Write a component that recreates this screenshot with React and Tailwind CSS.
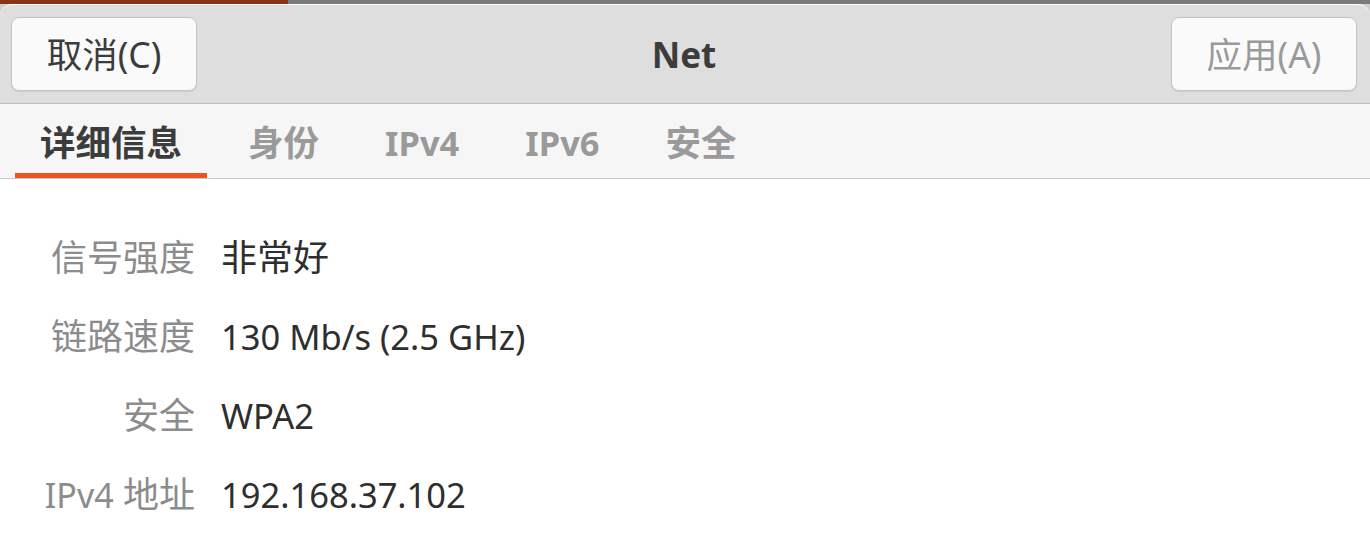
import React from "react";

const FONT = "font-['Noto_Sans','Noto_Sans_CJK_SC',sans-serif]";

const TABS = [
  ["详细信息", false],
  ["身份", false],
  ["IPv4", true],
  ["IPv6", true],
  ["安全", false],
];

const ROWS = [
  [null, "信号强度", "非常好", false],
  [null, "链路速度", "130 Mb/s (2.5 GHz)", true],
  [null, "安全", "WPA2", true],
  ["IPv4", " 地址", "192.168.37.102", true],
];

function HeaderButton({ children, disabled }) {
  return (
    <button
      type="button"
      className={`flex h-[74px] w-[186px] items-center justify-center rounded-[8px] border border-[#c3c3c3] bg-[#fafafa] pt-[2px] text-[35.5px] shadow-[0_1px_1px_rgba(0,0,0,0.08)] ${
        disabled ? "text-[#9a9a9a]" : "text-[#3c3c3c]"
      }`}
    >
      {children}
    </button>
  );
}

export default function App() {
  return (
    <div className={`h-[544px] w-[1370px] overflow-hidden bg-[#cfcfcf] ${FONT}`}>
      <div className="flex h-[4px]">
        <div className="w-[288px] bg-[#8a3414]" />
        <div className="flex-1 bg-[#7a7a7a]" />
      </div>
      <div className="flex h-[540px] flex-col overflow-hidden rounded-t-[12px] border-t border-white bg-white">
        {/* header bar */}
        <div className="flex h-[99px] items-center justify-between border-b border-[#bfbfbf] bg-[#dedede] pl-[11px] pr-[13px]">
          <HeaderButton>取消(C)</HeaderButton>
          <div className="pt-[2px] text-[35px] font-bold text-[#3c3c3c]">Net</div>
          <HeaderButton disabled>应用(A)</HeaderButton>
        </div>

        {/* tabs */}
        <div className="flex h-[75px] items-stretch gap-[16px] border-b border-[#c8c8c8] bg-[#f6f6f6] pl-[15px]">
          {TABS.map(([t, latin], i) => (
            <div
              key={t}
              className={`flex items-center border-b-[5px] px-[25px] pt-[8px] font-bold ${
                latin ? "text-[34.5px]" : "text-[35.5px]"
              } ${
                i === 0
                  ? "border-[#e95420] text-[#3c3c3c]"
                  : "border-transparent text-[#9a9a9a]"
              }`}
            >
              {t}
            </div>
          ))}
        </div>

        {/* details */}
        <div className="grid grid-cols-[195px_1fr] items-center gap-x-[26px] gap-y-[35px] bg-white pt-[57px] leading-[44px]">
          {ROWS.map(([prefix, label, value, latin]) => (
            <React.Fragment key={label}>
              <div className="text-right text-[36px] text-[#8c8c8c]">
                {prefix ? <span className="text-[34px]">{prefix}</span> : null}
                {label}
              </div>
              <div className={`${latin ? "text-[34.5px]" : "text-[36px]"} text-[#2e2e2e]`}>
                {value}
              </div>
            </React.Fragment>
          ))}
        </div>
      </div>
    </div>
  );
}
